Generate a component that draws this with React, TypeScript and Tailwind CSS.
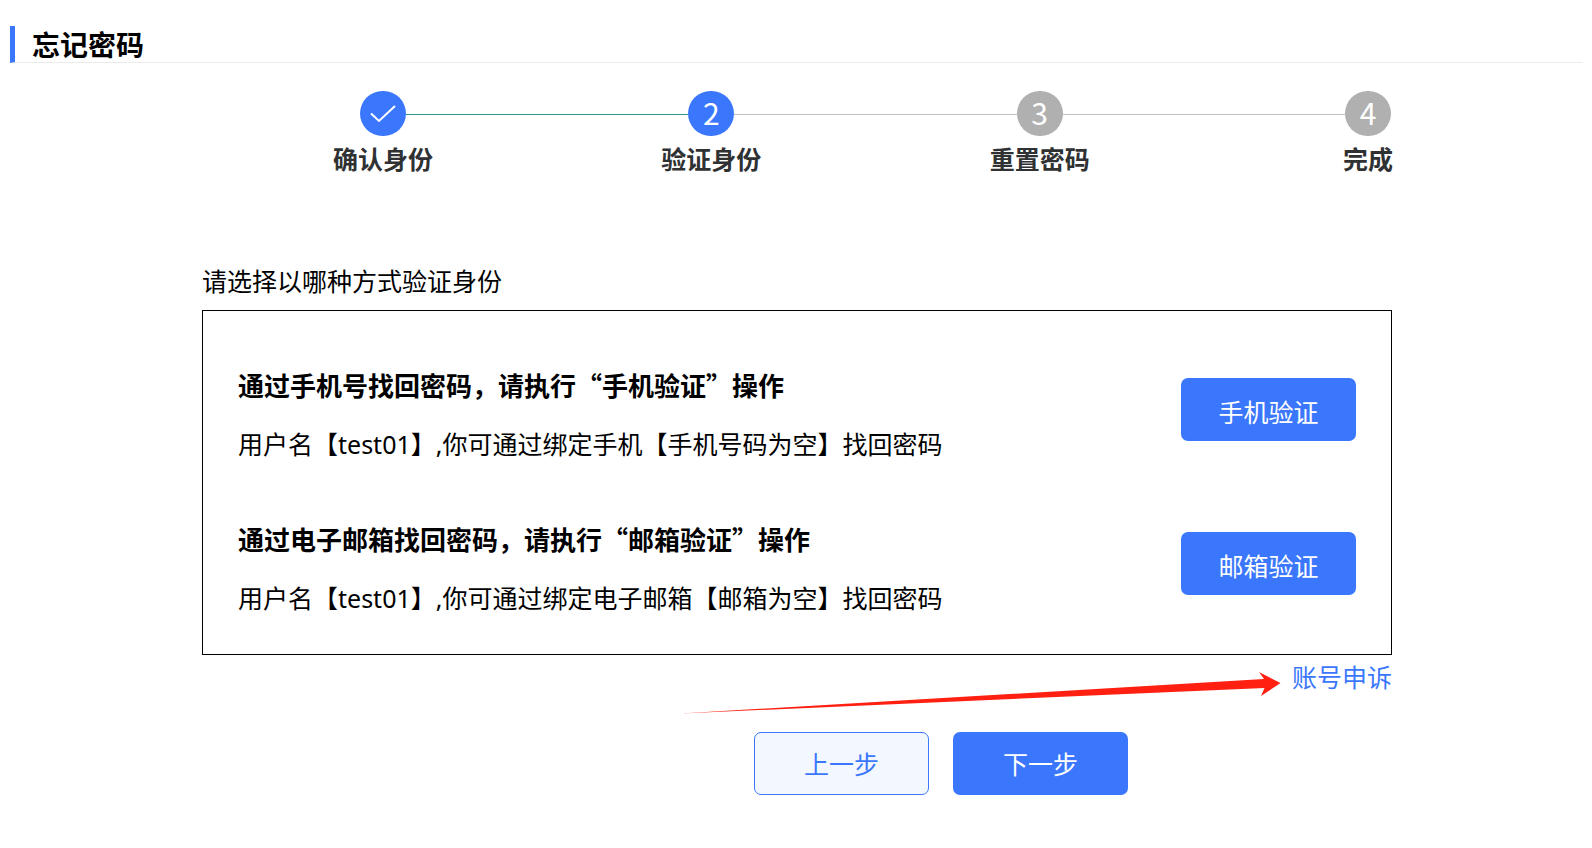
import clsx from "clsx";

type StepStatus = "done" | "active" | "wait";

type StepProps = {
  index: number;
  title: string;
  status: StepStatus;
  isLast: boolean;
};

type VerifyMethodProps = {
  title: string;
  description: string;
  action: string;
};

const steps: { title: string; status: StepStatus }[] = [
  { title: "确认身份", status: "done" },
  { title: "验证身份", status: "active" },
  { title: "重置密码", status: "wait" },
  { title: "完成", status: "wait" },
];

const methods: VerifyMethodProps[] = [
  {
    title: "通过手机号找回密码，请执行“手机验证”操作",
    description: "用户名【test01】,你可通过绑定手机【手机号码为空】找回密码",
    action: "手机验证",
  },
  {
    title: "通过电子邮箱找回密码，请执行“邮箱验证”操作",
    description: "用户名【test01】,你可通过绑定电子邮箱【邮箱为空】找回密码",
    action: "邮箱验证",
  },
];

const Step = ({ index, title, status, isLast }: StepProps) => {
  return (
    <li className={isLast ? "flex-none" : "flex-1"}>
      <div className="flex items-center">
        <div
          className={clsx(
            "flex justify-center items-center w-[46px] h-[45px] rounded-full text-white",
            status === "wait" ? "bg-[#b0b0b0]" : "bg-[#3b77fd]"
          )}
        >
          {status === "done" ? (
            <svg width="26" height="18" viewBox="0 0 26 18" fill="none">
              <path
                d="M1 8.5 L9 16 L25 1"
                stroke="currentColor"
                strokeWidth="2"
              />
            </svg>
          ) : (
            <span className="pb-1 text-[30px] leading-[38px] font-['Noto_Sans_CJK_SC',sans-serif]">
              {index}
            </span>
          )}
        </div>

        {!isLast && (
          <div
            className={clsx(
              "flex-1 h-px mt-0.5",
              status === "done" ? "bg-[#2c9a8b]" : "bg-[#bfbfbf]"
            )}
          ></div>
        )}
      </div>

      <div className="flex justify-center w-[46px] mt-1">
        <span className="whitespace-nowrap text-[#303133] text-[25px] leading-[38px] font-bold">
          {title}
        </span>
      </div>
    </li>
  );
};

const VerifyMethod = ({ title, description, action }: VerifyMethodProps) => {
  return (
    <div className="flex justify-between items-start">
      <div className="flex flex-col gap-[21px]">
        {/* CJK font first so the curly quotes take a full cell */}
        <h2 className="text-[26px] leading-[38px] font-bold font-['Noto_Sans_CJK_SC',sans-serif]">
          {title}
        </h2>
        <p className="text-[25px] leading-[38px]">{description}</p>
      </div>

      <button
        type="button"
        className="flex-none w-[175px] h-[63px] mt-3 pt-[6px] rounded-[7px] bg-[#3b77fd] text-white text-[25px]"
      >
        {action}
      </button>
    </div>
  );
};

const App = () => {
  return (
    <div
      lang="zh-CN"
      className="pl-[10px] pr-2 pt-[26px] bg-white text-black font-['Noto_Sans','Noto_Sans_CJK_SC',sans-serif]"
    >
      <h1 className="mr-px border-l-5 border-l-[#3b77fd] border-b border-b-[#ebebeb] pl-[17px] pt-[2px] text-[28px] leading-[34px] font-bold">
        忘记密码
      </h1>

      <main className="max-w-[1190px] mx-auto mt-7">
        <ol className="flex ml-[158px] mr-px">
          {steps.map((step, i) => (
            <Step
              key={step.title}
              index={i + 1}
              title={step.title}
              status={step.status}
              isLast={i === steps.length - 1}
            />
          ))}
        </ol>

        <p className="mt-[84px] text-[25px] leading-[38px]">
          请选择以哪种方式验证身份
        </p>

        <section className="flex flex-col gap-[57px] mt-[10px] px-[35px] pt-[55px] pb-[37px] border border-black">
          {methods.map((method) => (
            <VerifyMethod key={method.action} {...method} />
          ))}
        </section>

        <div className="relative flex justify-end mt-[3px]">
          <svg
            className="absolute right-[111px] top-[13px] text-[#ff2011]"
            width="600"
            height="44"
            viewBox="0 0 600 44"
            fill="currentColor"
          >
            <path d="M0 42.5 L583 8 L578 1 L599.5 12 L580 25 L583.5 17 Z" />
          </svg>
          <a href="#appeal" className="text-[#3b77fd] text-[25px] leading-[38px]">
            账号申诉
          </a>
        </div>

        <div className="flex justify-center gap-6 mt-9 pl-72">
          <button
            type="button"
            className="w-[175px] h-[63px] pt-[2px] rounded-[7px] border border-[#3b77fd] bg-[#f3f8ff] text-[#3b77fd] text-[25px]"
          >
            上一步
          </button>
          <button
            type="button"
            className="w-[175px] h-[63px] pt-[2px] rounded-[7px] bg-[#3b77fd] text-white text-[25px]"
          >
            下一步
          </button>
        </div>
      </main>
    </div>
  );
};

export default App;
